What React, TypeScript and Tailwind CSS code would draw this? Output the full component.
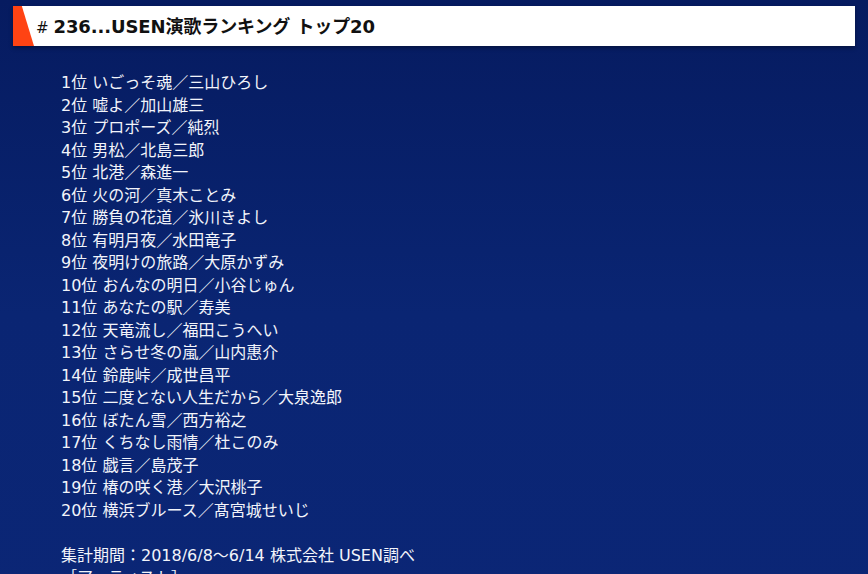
import React from 'react';

const ranking = [
  'いごっそ魂／三山ひろし',
  '嘘よ／加山雄三',
  'プロポーズ／純烈',
  '男松／北島三郎',
  '北港／森進一',
  '火の河／真木ことみ',
  '勝負の花道／氷川きよし',
  '有明月夜／水田竜子',
  '夜明けの旅路／大原かずみ',
  'おんなの明日／小谷じゅん',
  'あなたの駅／寿美',
  '天竜流し／福田こうへい',
  'さらせ冬の嵐／山内惠介',
  '鈴鹿峠／成世昌平',
  '二度とない人生だから／大泉逸郎',
  'ぼたん雪／西方裕之',
  'くちなし雨情／杜このみ',
  '戯言／島茂子',
  '椿の咲く港／大沢桃子',
  '横浜ブルース／髙宮城せいじ',
];

const App = () => {
  return (
    <div
      className="min-h-screen bg-[#0a2473] bg-gradient-to-b from-[#061b60] via-[#0a2573] to-[#0b2676] pt-[6px] pb-10 text-white"
      style={{ fontFamily: '"DejaVu Sans", "Noto Sans CJK JP", sans-serif' }}
    >
      {/* Title bar */}
      <div className="relative mx-[13px] flex h-10 items-center bg-white pl-[23px] shadow-[0_2px_4px_rgba(0,0,0,0.35)]">
        <div className="absolute left-0 top-0 h-full w-[21px] bg-[#ff4313] [clip-path:polygon(0_0,42%_0,100%_100%,0_100%)]" />
        <h1 className="text-[18px] font-bold tracking-[-0.1px] text-[#111]">
          <span className="mr-[5px] font-normal text-[15px]">#</span>236...USEN演歌ランキング トップ20
        </h1>
      </div>

      {/* Ranking list */}
      <div className="mt-[26px] pl-[61px] text-[16px] leading-[22.5px] text-[#f2f4fa]">
        {ranking.map((song, i) => (
          <div key={i}>
            {i + 1}位 {song}
          </div>
        ))}
        <div className="h-[22.5px]" />
        <div>集計期間：2018/6/8～6/14 株式会社 USEN調べ</div>
        <div>［アーティスト］</div>
      </div>
    </div>
  );
};

export default App;
